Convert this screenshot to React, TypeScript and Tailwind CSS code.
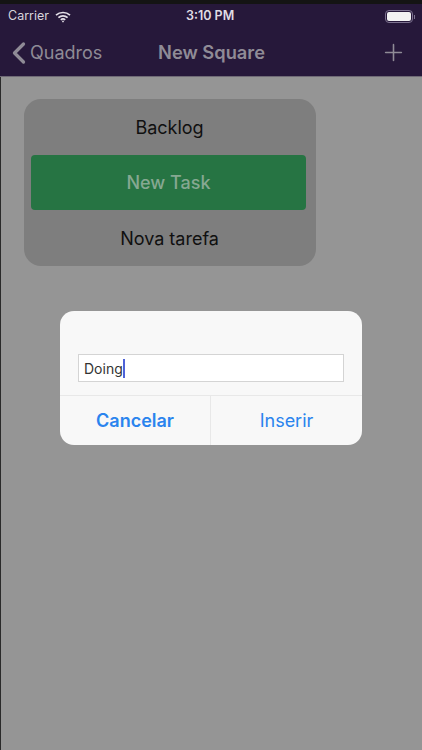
import { ChevronLeft, Plus } from "lucide-react";

function WifiIcon() {
  return (
    <svg width="16" height="12" viewBox="0 0 16 12" fill="none" stroke="#e4e0e8" strokeWidth="1.7" aria-hidden="true">
      <path d="M1 4.2C5 .6 11 .6 15 4.2" />
      <path d="M3.4 6.6C6 4.3 10 4.3 12.6 6.6" />
      <path d="M5.8 8.9C7 7.9 9 7.9 10.2 8.9" />
      <circle cx="8" cy="10.4" r="0.9" fill="#e4e0e8" stroke="none" />
    </svg>
  );
}

function StatusBar() {
  return (
    <div className="relative flex h-[25px] items-center justify-between pl-[8px] pr-[7px] text-[12.5px] text-[#d8d5dc]">
      <div className="flex items-center gap-[6px]">
        <span>Carrier</span>
        <WifiIcon />
      </div>
      <span className="absolute left-[186px] font-semibold text-[#e0dde4]">3:10 PM</span>
      <div className="flex items-center">
        <div className="flex h-[13px] w-[28px] items-center rounded-[4px] border border-[#7d7290] p-[1px]">
          <div className="h-full w-full rounded-[2px] bg-[#f2f2f2]" />
        </div>
        <div className="ml-[1px] h-[4px] w-[1px] bg-[#7d7290]" />
      </div>
    </div>
  );
}

function NavBar() {
  return (
    <div className="relative flex h-[47px] items-center justify-between pr-[15px] text-[#8f8b96]">
      <div className="flex items-center">
        <ChevronLeft className="ml-[1px] h-[36px] w-[36px]" strokeWidth={2.2} aria-hidden="true" />
        <span className="-ml-[7px] text-[18px]">Quadros</span>
      </div>
      <span className="absolute left-[158px] text-[18.3px] font-semibold">New Square</span>
      <Plus className="h-[27px] w-[27px]" strokeWidth={1.4} aria-hidden="true" />
    </div>
  );
}

function Column() {
  return (
    <div className="ml-[24px] flex h-[167px] w-[292px] flex-col rounded-[17px] bg-[#7e7e7e] pl-[7px] pr-[10px] text-center text-[18px] text-[#101010]">
      <div className="flex h-[56px] items-center justify-center pl-[2px]">Backlog</div>
      <div className="flex h-[55px] items-center justify-center rounded-[4px] bg-[#267443] font-medium text-[#86a892]">
        New Task
      </div>
      <div className="flex h-[56px] items-center justify-center pl-[2px]">Nova tarefa</div>
    </div>
  );
}

function PromptDialog() {
  return (
    <div className="ml-[60px] mt-[45px] w-[302px] overflow-hidden rounded-[14px] bg-[#f8f8f8]">
      <div className="px-[18px] pb-[13px] pt-[43px]">
        <div className="flex h-[28px] items-center border border-[#d4d4d4] bg-white px-[5px] text-[14px] text-[#333333]">
          <span>Doing</span>
          <span className="h-[19px] w-[2px] bg-[#4f62d8]" />
        </div>
      </div>
      <div className="grid h-[50px] grid-cols-[151px_151px] border-t border-[#e8e8e8] text-[18px] text-[#2a84ee]">
        <div className="flex items-center justify-center border-r border-[#e8e8e8] font-semibold">Cancelar</div>
        <div className="flex items-center justify-center">Inserir</div>
      </div>
    </div>
  );
}

export default function App() {
  return (
    <div className="h-[750px] w-[422px] overflow-hidden bg-[#959595] font-['Inter',sans-serif] shadow-[inset_1px_0_0_#2a2a2a]">
      <div className="h-[4px] bg-[#141414]" />
      <div className="border-b border-[#6f6a76] bg-[#26183a]">
        <StatusBar />
        <NavBar />
      </div>
      <div className="pt-[22px]">
        <Column />
        <PromptDialog />
      </div>
    </div>
  );
}
